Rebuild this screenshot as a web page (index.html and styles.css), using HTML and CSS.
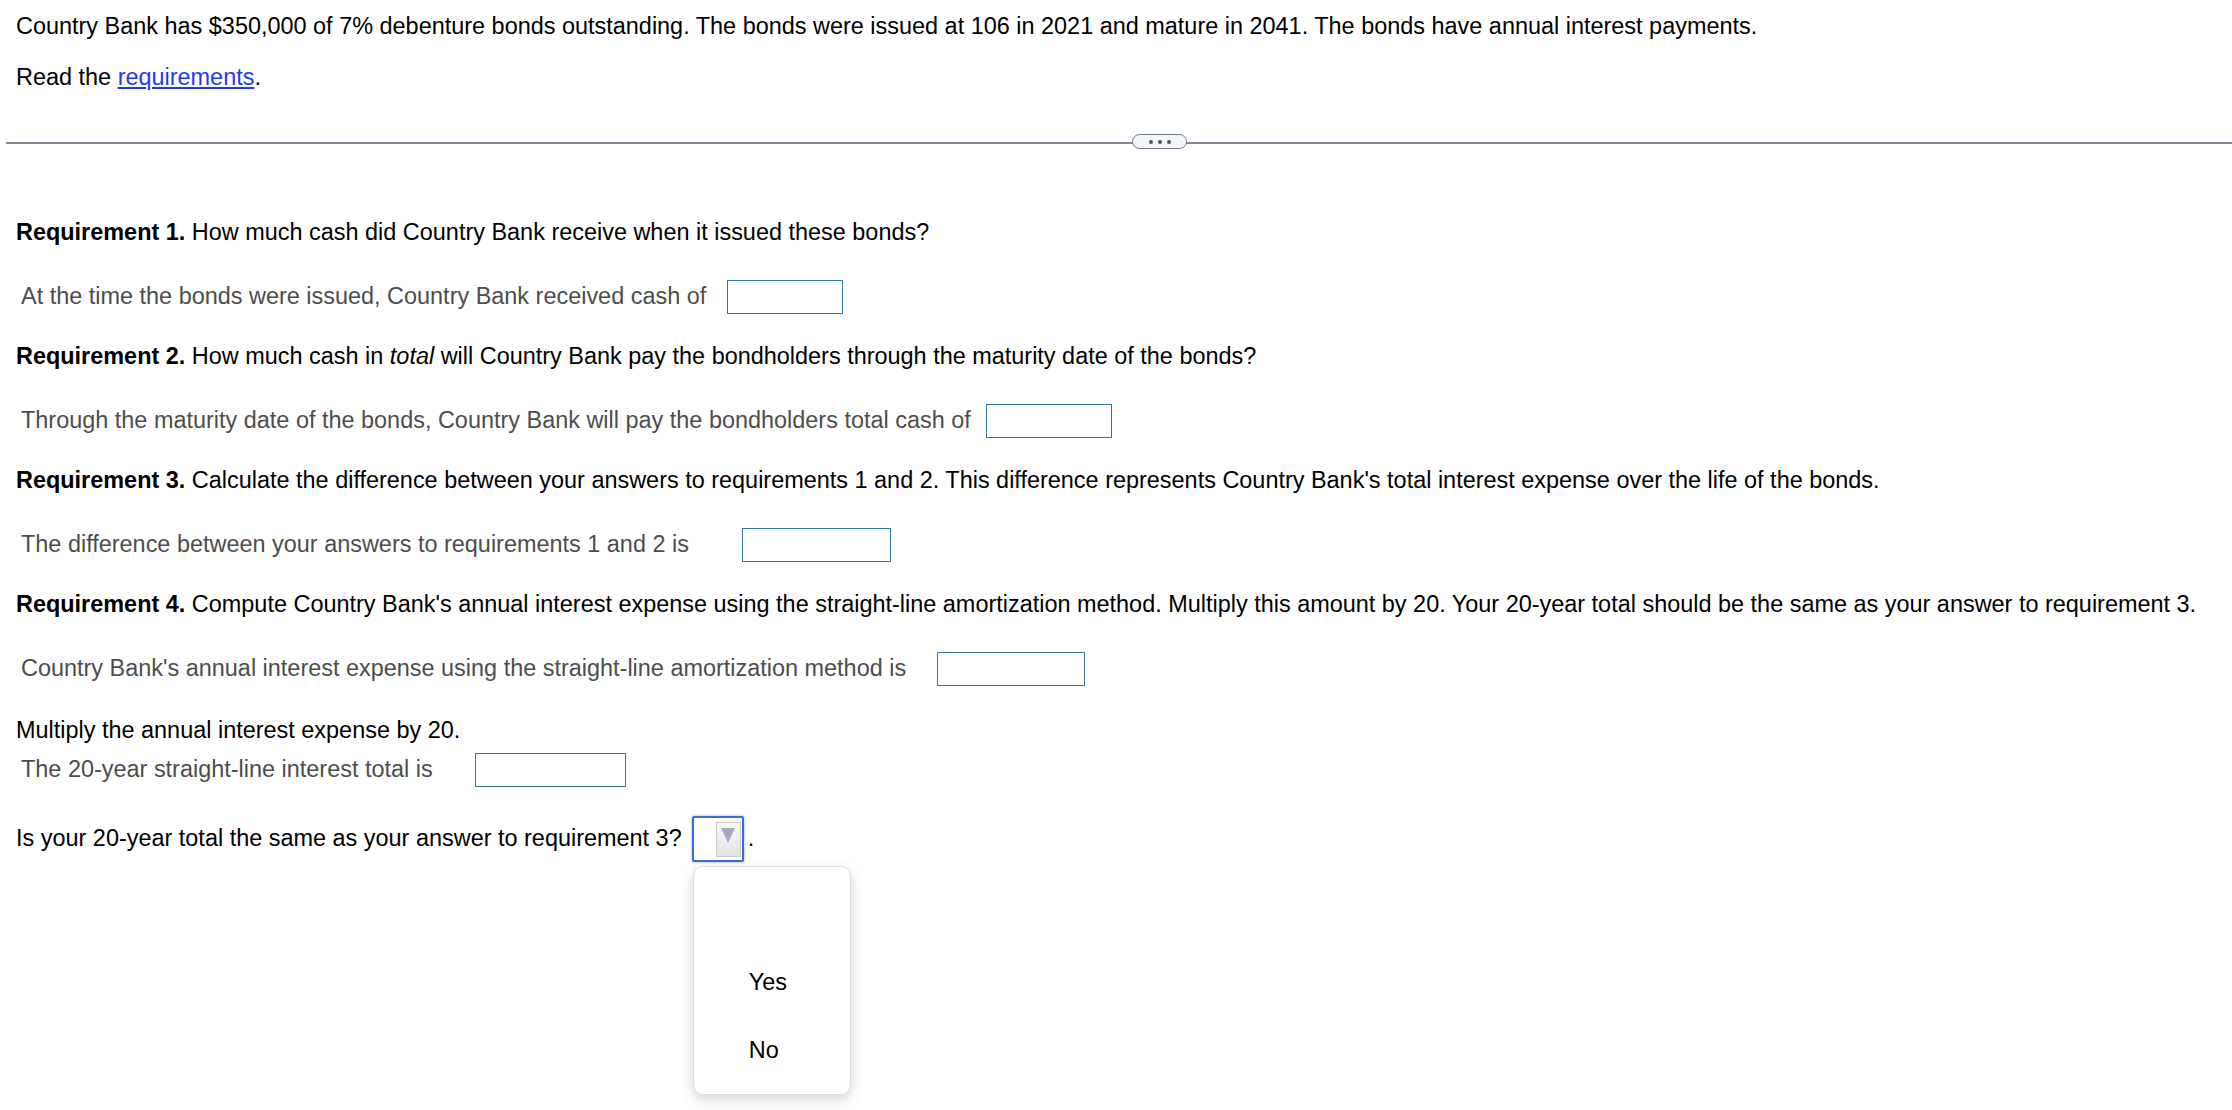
FILE: index.html
```html
<!DOCTYPE html>
<html lang="en">
<head>
<meta charset="utf-8">
<title>Country Bank bonds</title>
<link rel="stylesheet" href="styles.css">
</head>
<body>
<div class="page">
  <p class="line intro">Country Bank has $350,000 of 7% debenture bonds outstanding. The bonds were issued at 106 in 2021 and mature in 2041. The bonds have annual interest payments.</p>
  <p class="line read">Read the <a href="#" class="link">requirements</a>.</p>

  <div class="divider">
    <div class="pill"><span class="dot"></span><span class="dot"></span><span class="dot"></span></div>
  </div>

  <p class="line req req-first"><b>Requirement 1.</b> How much cash did Country Bank receive when it issued these bonds?</p>
  <div class="answer"><span class="label w1">At the time the bonds were issued, Country Bank received cash of</span><span class="box bw1"></span></div>

  <p class="line req"><b>Requirement 2.</b> How much cash in <i>total</i> will Country Bank pay the bondholders through the maturity date of the bonds?</p>
  <div class="answer"><span class="label w2">Through the maturity date of the bonds, Country Bank will pay the bondholders total cash of</span><span class="box bw2"></span></div>

  <p class="line req"><b>Requirement 3.</b> Calculate the difference between your answers to requirements 1 and 2. This difference represents Country Bank's total interest expense over the life of the bonds.</p>
  <div class="answer"><span class="label w3">The difference between your answers to requirements 1 and 2 is</span><span class="box bw3"></span></div>

  <p class="line req"><b>Requirement 4.</b> Compute Country Bank's annual interest expense using the straight-line amortization method. Multiply this amount by 20. Your 20-year total should be the same as your answer to requirement 3.</p>
  <div class="answer"><span class="label w4">Country Bank's annual interest expense using the straight-line amortization method is</span><span class="box bw4"></span></div>

  <p class="line multiply">Multiply the annual interest expense by 20.</p>
  <div class="answer tight"><span class="label w5">The 20-year straight-line interest total is</span><span class="box bw5"></span></div>

  <div class="question">
    <span class="qtext">Is your 20-year total the same as your answer to requirement 3?</span>
    <span class="select">
      <span class="arrow-btn"><span class="tri"></span></span>
      <span class="menu">
        <span class="opt"></span>
        <span class="opt">Yes</span>
        <span class="opt">No</span>
      </span>
    </span>
    <span class="period">.</span>
  </div>
</div>
</body>
</html>
```

FILE: styles.css
```css
html, body {
  margin: 0;
  padding: 0;
  background: #ffffff;
}

body {
  font-family: "Liberation Sans", Arial, sans-serif;
  font-size: 23.45px;
  color: #000000;
}

.page {
  padding: 9px 0 260px 16px;
}

.line {
  margin: 0;
  height: 34px;
  line-height: 34px;
  white-space: nowrap;
}

.read {
  margin-top: 17px;
}

.link {
  color: #1f3bee;
  text-decoration: underline;
}

.divider {
  margin: 48px 0 0 -10px;
  height: 1.5px;
  background: #7f8a96;
  position: relative;
}

.pill {
  position: absolute;
  left: 1126px;
  top: -8px;
  width: 53px;
  height: 13px;
  border: 1.5px solid #6c7784;
  border-radius: 9px;
  background: #f3f5f8;
  display: flex;
  align-items: center;
  justify-content: center;
  gap: 5px;
}

.dot {
  width: 4px;
  height: 4px;
  border-radius: 50%;
  background: #4c545e;
}

.req {
  margin-top: 25px;
}

.req-first {
  margin-top: 71px;
}

.answer {
  margin-top: 31px;
  height: 34px;
  display: flex;
  align-items: center;
  white-space: nowrap;
  color: #4d4d4d;
}

.label {
  display: block;
  padding-left: 5px;
  box-sizing: border-box;
  flex: none;
}

.w1 { width: 711px; }
.w2 { width: 970px; }
.w3 { width: 726px; }
.w4 { width: 921px; }
.w5 { width: 459px; }

.box {
  display: block;
  flex: none;
  height: 34px;
  box-sizing: border-box;
  border: 1px solid #2f7a9c;
  background: #ffffff;
}

.bw1 { width: 116px; }
.bw2 { width: 126px; }
.bw3 { width: 149px; }
.bw4 { width: 148px; }
.bw5 { width: 151px; }

.multiply {
  margin-top: 27px;
}

.tight {
  margin-top: 6px;
}

.question {
  margin-top: 29px;
  height: 46px;
  display: flex;
  align-items: center;
  white-space: nowrap;
}

.select {
  position: relative;
  display: block;
  flex: none;
  margin-left: 10px;
  width: 52px;
  height: 46px;
  box-sizing: border-box;
  border: 2px solid #3d6bd9;
  border-radius: 2px;
  box-shadow: 0 0 3px rgba(61, 107, 217, 0.55);
  background: #ffffff;
}

.arrow-btn {
  position: absolute;
  right: 1px;
  top: 4px;
  width: 25px;
  height: 35px;
  box-sizing: border-box;
  border: 1px solid #c9c9c9;
  background: linear-gradient(#f8f8f8, #e3e3e3);
  display: flex;
  justify-content: center;
  padding-top: 5px;
}

.tri {
  width: 0;
  height: 0;
  border-left: 7px solid transparent;
  border-right: 7px solid transparent;
  border-top: 15px solid #a2a9b8;
}

.menu {
  position: absolute;
  left: -1px;
  top: 48px;
  width: 158px;
  height: 229px;
  box-sizing: border-box;
  border: 1px solid #dddddd;
  border-radius: 10px;
  background: #ffffff;
  box-shadow: 0 5px 14px rgba(0, 0, 0, 0.16);
  padding: 14px 0 0 55px;
  display: flex;
  flex-direction: column;
  color: #000000;
  z-index: 5;
}

.opt {
  height: 68px;
  display: flex;
  align-items: center;
}

.period {
  margin-left: 4px;
}
```
